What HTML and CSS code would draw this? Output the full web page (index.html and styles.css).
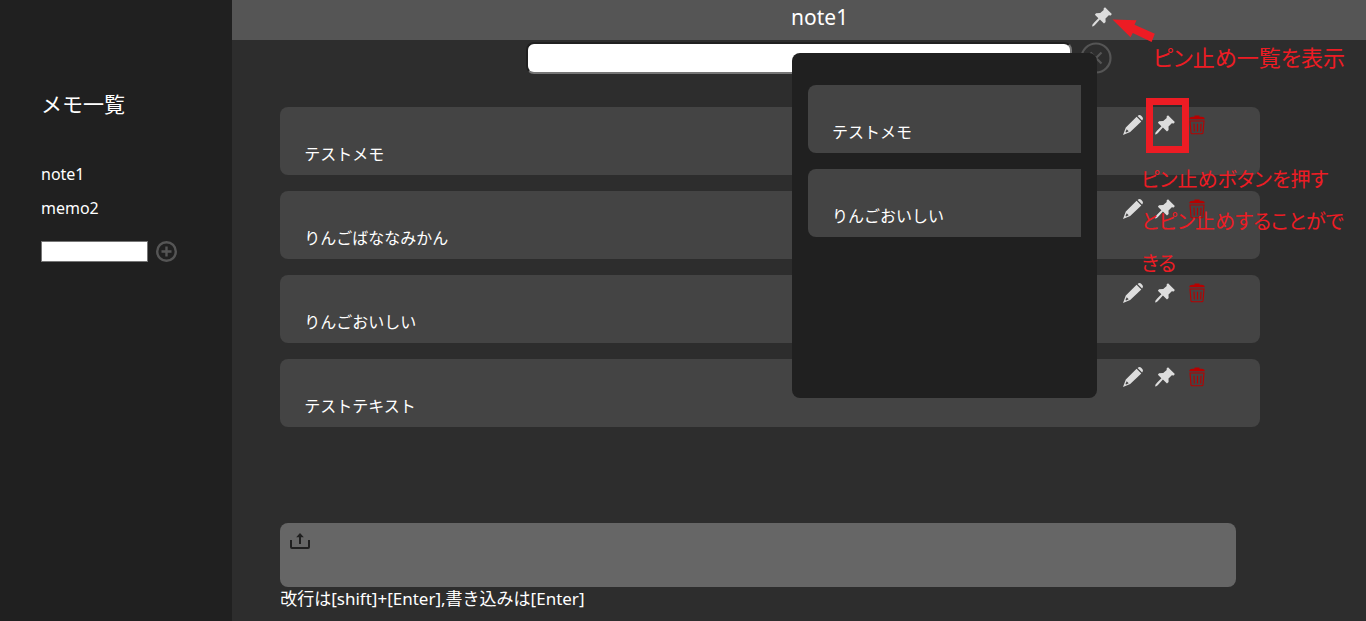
FILE: index.html
```html
<!DOCTYPE html>
<html lang="ja">
<head>
<meta charset="utf-8">
<meta name="viewport" content="width=device-width, initial-scale=1">
<title>note1</title>
<link rel="stylesheet" href="styles.css">
</head>
<body>
<svg class="sprite" aria-hidden="true">
  <symbol id="pin" viewBox="0 0 20 20"><path d="M13 0.3 19.8 7 18.8 8.4 16.8 8.2 13.5 11.6 13.6 15 12 16.6 7.9 12.6 2.7 18.2 0.5 19.7 0.2 18 2.2 15.6 6.4 11.2 2.9 7.8 4 6.2 8.2 6.1 11.7 3 11.6 1.4Z"/></symbol>
  <symbol id="pencil" viewBox="0 0 20 20"><path d="M13.6 1.7 18.3 6.4 7.2 17 0 20 2.8 12.6ZM14.6 0.9 15.6 0.3Q17 -0.3 18.2 0.8L19.3 1.9Q20.3 3.1 19.7 4.4L19.1 5.4Z"/><path class="pencil-lead" d="M3.7 14.2 5.7 16.2 3 17.4 2.5 16.9Z"/></symbol>
  <symbol id="trash" viewBox="0 0 20 20"><path d="M2.4 4.3V3.2Q2.6 2.2 5.5 1.8H7.5V0.5H12.5V1.8H14.5Q17.4 2.2 17.6 3.2V4.3Z"/><path class="line" d="M3 6H17L16 17.9Q15.8 18.7 14.7 18.7H5.3Q4.2 18.7 4 17.9ZM7 8.7 7.3 16.5M10.5 8.7V16.5M14 8.7 13.7 16.5"/></symbol>
</svg>
<div class="app">
  <nav class="sidebar">
    <h2 class="sidebar-title">メモ一覧</h2>
    <ul class="note-list">
      <li><a href="#note1">note1</a></li>
      <li><a href="#memo2">memo2</a></li>
    </ul>
    <form class="add-form">
      <input class="add-input" type="text" aria-label="メモの名前">
      <button class="icon-button" type="button" aria-label="追加">
        <svg class="icon-add" viewBox="0 0 21 21"><circle cx="10.5" cy="10.5" r="9.3"/><path d="M10.5 5.5V15.5M5.5 10.5H15.5"/></svg>
      </button>
    </form>
  </nav>

  <main class="main">
    <header class="header">
      <h1 class="header-title">note1</h1>
      <button class="icon-button header-pin" type="button" aria-label="ピン止め一覧"><svg class="icon"><use href="#pin"/></svg></button>
    </header>

    <form class="search">
      <input class="search-input" type="text" aria-label="検索">
      <button class="icon-button search-clear" type="button" aria-label="クリア">
        <svg class="icon-clear" viewBox="0 0 32 32"><circle cx="16" cy="16" r="14.5"/><path d="M10.5 10.5 21.5 21.5M21.5 10.5 10.5 21.5"/></svg>
      </button>
    </form>

    <section class="cards">
      <article class="card">
        <div class="actions">
          <button class="icon-button" type="button" aria-label="編集"><svg class="icon"><use href="#pencil"/></svg></button>
          <button class="icon-button" type="button" aria-label="ピン止め"><svg class="icon"><use href="#pin"/></svg></button>
          <button class="icon-button danger" type="button" aria-label="削除"><svg class="icon"><use href="#trash"/></svg></button>
        </div>
        <p class="card-text">テストメモ</p>
      </article>
      <article class="card">
        <div class="actions">
          <button class="icon-button" type="button" aria-label="編集"><svg class="icon"><use href="#pencil"/></svg></button>
          <button class="icon-button" type="button" aria-label="ピン止め"><svg class="icon"><use href="#pin"/></svg></button>
          <button class="icon-button danger" type="button" aria-label="削除"><svg class="icon"><use href="#trash"/></svg></button>
        </div>
        <p class="card-text">りんごばななみかん</p>
      </article>
      <article class="card">
        <div class="actions">
          <button class="icon-button" type="button" aria-label="編集"><svg class="icon"><use href="#pencil"/></svg></button>
          <button class="icon-button" type="button" aria-label="ピン止め"><svg class="icon"><use href="#pin"/></svg></button>
          <button class="icon-button danger" type="button" aria-label="削除"><svg class="icon"><use href="#trash"/></svg></button>
        </div>
        <p class="card-text">りんごおいしい</p>
      </article>
      <article class="card">
        <div class="actions">
          <button class="icon-button" type="button" aria-label="編集"><svg class="icon"><use href="#pencil"/></svg></button>
          <button class="icon-button" type="button" aria-label="ピン止め"><svg class="icon"><use href="#pin"/></svg></button>
          <button class="icon-button danger" type="button" aria-label="削除"><svg class="icon"><use href="#trash"/></svg></button>
        </div>
        <p class="card-text">テストテキスト</p>
      </article>
    </section>

    <form class="composer">
      <div class="composer-box">
        <button class="icon-button" type="button" aria-label="アップロード">
          <svg class="icon-upload" viewBox="0 0 20 17"><path class="line" d="M1 7V14Q1 15 2 15H18Q19 15 19 14V7M10 11V3"/><path d="M10 0 13.8 4.3H6.2Z"/></svg>
        </button>
        <textarea class="composer-input" aria-labelledby="composer-hint"></textarea>
      </div>
      <p class="composer-hint" id="composer-hint">改行は[shift]+[Enter],書き込みは[Enter]</p>
    </form>

    <aside class="popup" aria-label="ピン止め一覧">
      <article class="pinned"><p class="card-text">テストメモ</p></article>
      <article class="pinned"><p class="card-text">りんごおいしい</p></article>
    </aside>

    <svg class="arrow" viewBox="0 0 44 24" aria-hidden="true"><path d="M0.5 0.5 24.5 1.2 22.5 5.8 42.8 14.8 39.6 23 20.8 13.9 18.5 18.2Z"/></svg>
    <p class="callout callout-list">ピン止め一覧を表示</p>
    <div class="highlight"></div>
    <p class="callout callout-button">ピン止めボタンを押す<br>とピン止めすることがで<br>きる</p>
  </main>
</div>
</body>
</html>
```
FILE: styles.css
```css
* { box-sizing: border-box; }

body {
  margin: 0;
  background: #2d2d2d;
  color: #fff;
  font: 16px/24px "Noto Sans", "Noto Sans CJK JP", sans-serif;
}

h1, h2, p, ul { margin: 0; padding: 0; font-weight: 400; }

.sprite { display: none; }

.app {
  display: grid;
  grid-template-columns: 17% 1fr;
  min-height: 100vh;
}

.icon-button {
  display: flex;
  padding: 0;
  border: 0;
  background: none;
  color: #ddd;
  cursor: pointer;
}

.icon { width: 20px; height: 20px; fill: currentColor; }
.danger { color: #b80000; }
.line { fill: none; stroke: currentColor; stroke-width: 1.1; }
.pencil-lead { fill: #444; }

/* Sidebar */
.sidebar { padding: 88px 41px 24px; background: #202020; }
.sidebar-title { font-size: 21px; line-height: 32px; white-space: nowrap; }

.note-list {
  display: grid;
  gap: 10px;
  margin-top: 42px;
  list-style: none;
}
.note-list a { color: inherit; text-decoration: none; }

.add-form { display: flex; align-items: center; gap: 8px; margin-top: 21px; }
.add-input {
  width: 107px;
  height: 21px;
  padding: 1px 2px;
  border: 1px solid #767676;
  background: #fff;
}
.icon-add { width: 21px; height: 21px; fill: none; stroke: #555; stroke-width: 2.4; }

/* Main column */
.main { position: relative; display: flex; flex-direction: column; }

.header {
  display: grid;
  grid-template-columns: 1fr auto 1fr;
  align-items: center;
  height: 40px;
  padding: 0 0 6px 41px;
  background: #555;
}
.header-title { grid-column: 2; font-size: 21px; line-height: 32px; }
.header-pin { justify-self: start; margin-left: 244px; }

.search {
  display: grid;
  grid-template-columns: 1fr 546px 1fr;
  align-items: center;
  margin-top: 2px;
}
.search-input {
  grid-column: 2;
  height: 32px;
  padding: 0 8px;
  border: 2px solid;
  border-color: #202020 #767676 #767676 #202020;
  border-radius: 8px;
  background: #fff;
}
.search-clear { justify-self: start; margin-left: 8px; }
.icon-clear { width: 32px; height: 32px; fill: none; stroke: #555; stroke-width: 2.2; }

.cards { display: grid; gap: 16px; padding: 33px 106px 24px 48px; }
.card { padding: 8px 53px 9px 24px; border-radius: 8px; background: #444; }
.actions { display: flex; justify-content: flex-end; gap: 12px; margin-bottom: 7px; }

.composer { margin-top: auto; padding: 0 130px 10px 48px; }
.composer-box {
  display: flex;
  align-items: flex-start;
  gap: 10px;
  height: 64px;
  padding: 10px;
  border-radius: 8px;
  background: #666;
}
.composer-box .icon-button { color: #202020; }
.icon-upload { width: 20px; height: 17px; fill: currentColor; }
.icon-upload .line { stroke-width: 2; }
.composer-input {
  flex: 1;
  height: 100%;
  padding: 0;
  border: 0;
  background: none;
  color: inherit;
  font: inherit;
  resize: none;
}
.composer-hint { font-size: 17px; }

/* Pinned list, opened over the cards */
.popup {
  position: absolute;
  top: 53px;
  right: 269px;
  display: flex;
  flex-direction: column;
  gap: 16px;
  width: 305px;
  height: 345px;
  padding: 32px 16px;
  border-radius: 8px;
  background: #202020;
}
.pinned { padding: 35px 24px 9px; border-radius: 8px 0 0 8px; background: #444; }

/* Red callouts drawn over the page */
.arrow { position: absolute; top: 19px; right: 210px; width: 44px; height: 24px; fill: #ed1c24; }
.highlight {
  position: absolute;
  top: 98px;
  right: 177px;
  width: 43px;
  height: 55px;
  border: 7px solid #ed1c24;
}
.callout {
  position: absolute;
  color: #ed1c24;
  font-family: "Noto Sans CJK JP", sans-serif;
  font-size: 22px;
  line-height: 42px;
  font-feature-settings: "palt";
  white-space: nowrap;
}
.callout-list { top: 35px; right: 21px; }
.callout-button { top: 158px; right: 22px; font-size: 20px; }
```
